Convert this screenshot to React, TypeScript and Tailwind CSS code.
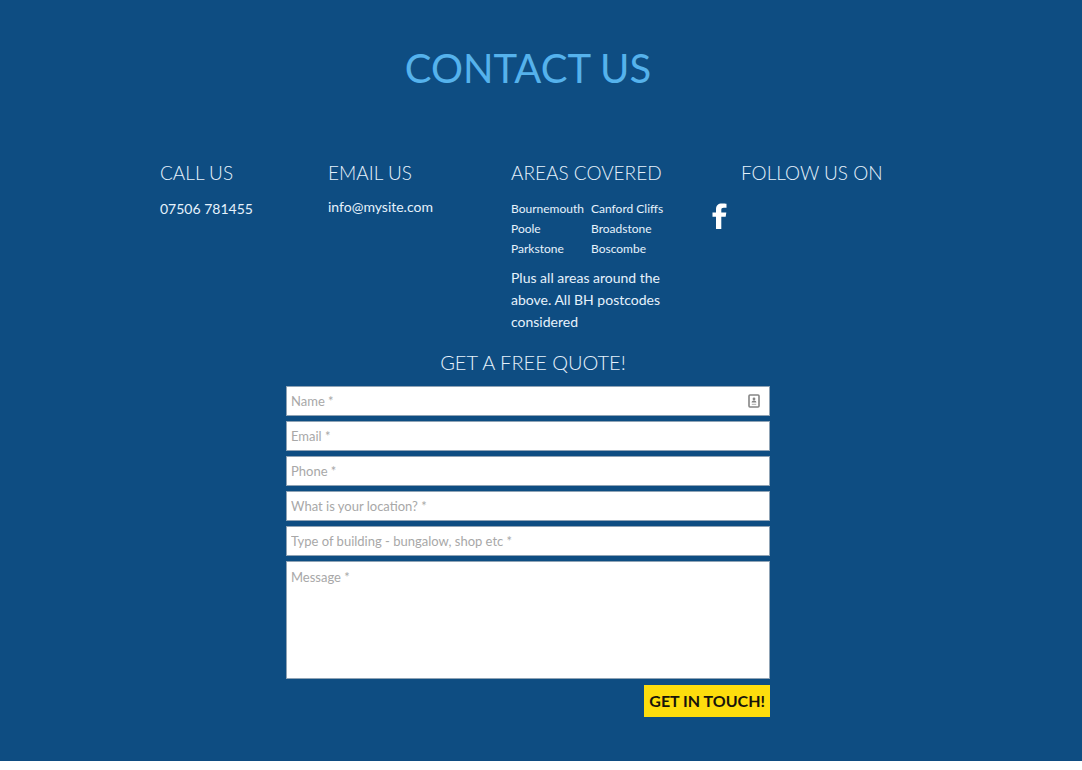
import React from "react";

const fields = [
  { id: "name", label: "Name *", type: "text" },
  { id: "email", label: "Email *", type: "email" },
  { id: "phone", label: "Phone *", type: "tel" },
  { id: "location", label: "What is your location? *", type: "text" },
  { id: "building", label: "Type of building - bungalow, shop etc *", type: "text" },
];

const areas = [
  ["Bournemouth", "Canford Cliffs"],
  ["Poole", "Broadstone"],
  ["Parkstone", "Boscombe"],
];

const control =
  "block w-full rounded-none border border-[#8fa3b5] bg-white px-1 text-[13px] font-normal text-gray-700 placeholder:text-[#a8a8a8] placeholder:opacity-100 outline-none";

function ColumnTitle({ children }: { children: React.ReactNode }) {
  return <h2 className="text-[19px] leading-6 font-light whitespace-nowrap">{children}</h2>;
}

function ContactCardIcon() {
  return (
    <svg viewBox="0 0 12 14" className="h-3.5 w-3" fill="none" aria-hidden="true">
      <rect x="1" y="1" width="10" height="12" rx="1" stroke="#858585" strokeWidth="1.6" />
      <circle cx="6" cy="5" r="1.4" fill="#858585" />
      <path d="M3.6 8.6c0-1.5 1-2.2 2.4-2.2s2.4.7 2.4 2.2z" fill="#858585" />
      <path d="M3.8 10.3h4.4" stroke="#a5a5a5" strokeWidth=".9" />
    </svg>
  );
}

export default function App() {
  return (
    <main className="bg-[#0e4d82] pt-11 pr-[26px] pb-11 font-['Lato','Open_Sans',sans-serif] text-[#e6f2fc]">
      <h1 className="text-center text-[40px] leading-12 text-[#55b2ec]">CONTACT US</h1>

      <div className="mx-auto mt-[69px] grid max-w-[736px] grid-cols-[168fr_183fr_201fr_184fr]">
        <section>
          <ColumnTitle>CALL US</ColumnTitle>
          <p className="mt-3 text-sm leading-6">
            <a href="tel:07506781455">07506 781455</a>
          </p>
        </section>

        <section>
          <ColumnTitle>EMAIL US</ColumnTitle>
          <p className="mt-2.5 text-sm leading-6">
            <a href="mailto:info@mysite.com">info@mysite.com</a>
          </p>
        </section>

        <section>
          <ColumnTitle>AREAS COVERED</ColumnTitle>
          <ul className="mt-3.5 text-xs leading-5">
            {areas.map(([left, right]) => (
              <li key={left} className="grid grid-cols-[80px_1fr]">
                <span>{left}</span>
                <span>{right}</span>
              </li>
            ))}
          </ul>
          <p className="mt-2 max-w-[160px] text-sm leading-[22px]">
            Plus all areas around the above. All BH postcodes considered
          </p>
        </section>

        <section>
          <div className="pl-[29px]">
            <ColumnTitle>FOLLOW US ON</ColumnTitle>
          </div>
          <a href="#facebook" aria-label="Facebook" className="mt-[18px] inline-block">
            <svg viewBox="0 0 15 26" className="h-[26px] w-[15px]" fill="#fff" aria-hidden="true">
              <path d="M4 26V13.8H.5V9.4H4V6.3C4 2.4 6.3.4 9.8.4c1.9 0 4.2.2 4.7.3v4.1h-2.7c-1.9 0-2.5.8-2.5 2.2v2.4h5l-.6 4.4H9.3V26z" />
            </svg>
          </a>
        </section>
      </div>

      <form
        className="mx-auto mt-[17px] flex max-w-[484px] flex-col gap-[5px]"
        onSubmit={(event) => event.preventDefault()}
      >
        <h2 className="mb-[7px] pl-2.5 text-center text-xl leading-6 font-light">GET A FREE QUOTE!</h2>
        {fields.map((field) => (
          <div key={field.id} className="relative">
            <input
              id={field.id}
              type={field.type}
              aria-label={field.label}
              placeholder={field.label}
              className={`${control} h-[30px]`}
            />
            {field.id === "name" && (
              <span className="absolute inset-y-0 right-2.5 flex items-center">
                <ContactCardIcon />
              </span>
            )}
          </div>
        ))}
        <textarea
          id="message"
          aria-label="Message *"
          placeholder="Message *"
          className={`${control} h-[118px] resize-none pt-1 leading-[22px]`}
        />
        <button
          type="submit"
          className="mt-px h-8 self-end bg-[#fddd0d] px-[5px] text-base font-bold whitespace-nowrap text-[#17140a]"
        >
          GET IN TOUCH!
        </button>
      </form>
    </main>
  );
}
